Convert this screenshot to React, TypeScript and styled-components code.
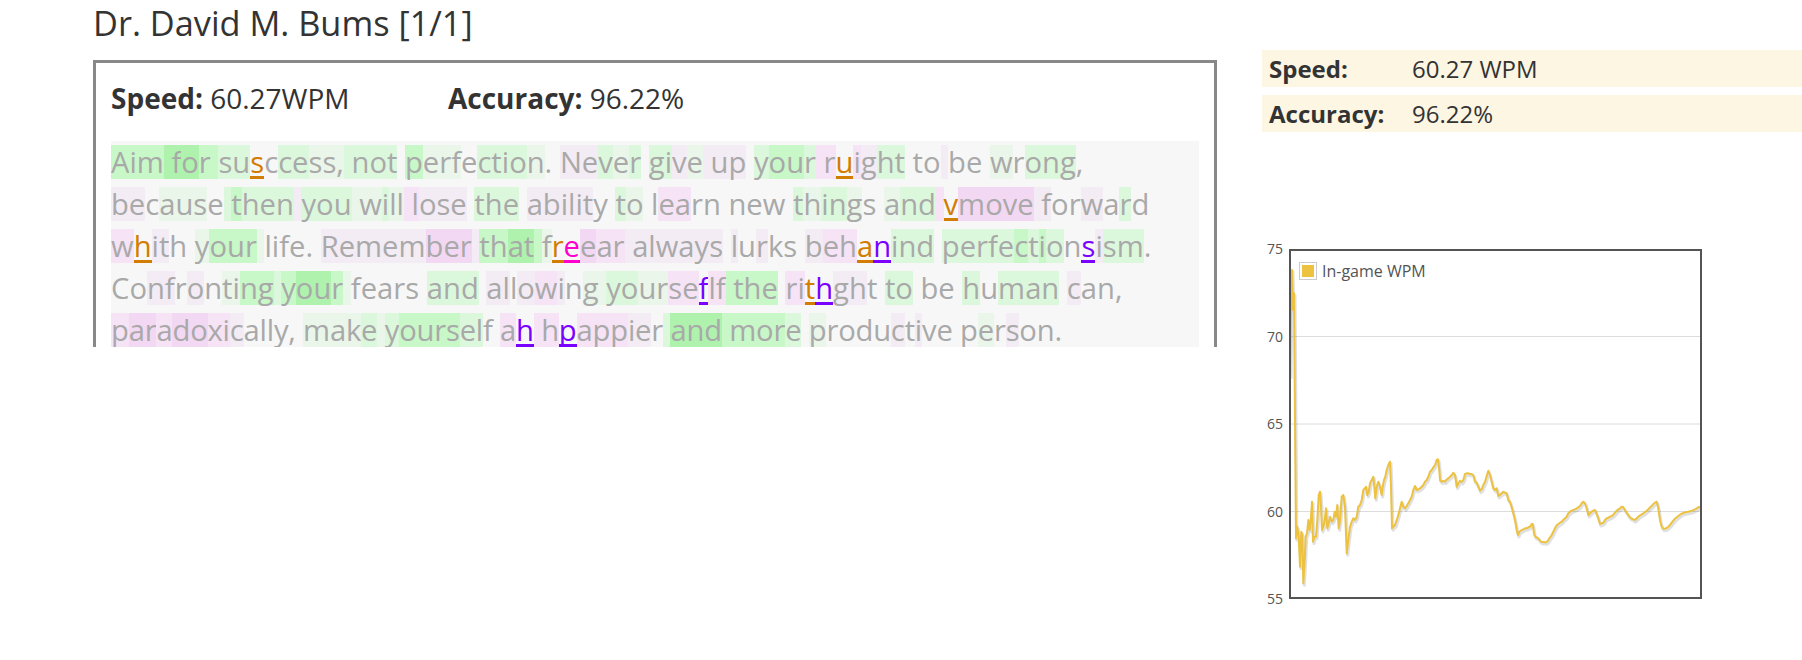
import React from 'react';
import styled, {createGlobalStyle} from 'styled-components';

const GlobalStyle = createGlobalStyle`
  html, body {
    margin: 0;
    padding: 0;
    background: #fff;
    overflow: hidden;
  }
  body {
    font-family: "Open Sans", "Noto Sans", sans-serif;
    color: #333;
  }
`

const Page = styled.div`
  display: flex;
  align-items: flex-start;
  width: 1802px;
  box-sizing: border-box;
  padding-left: 93px;
`

const Main = styled.section`
  flex: none;
  width: 1124px;
`

const Title = styled.h2`
  margin: 0 0 14px;
  font-size: 34.3px;
  font-weight: 400;
  line-height: 46px;
  color: #333;
`

const Card = styled.div`
  box-sizing: border-box;
  height: 287px;
  border: 3px solid #888;
  border-bottom: none;
  padding: 16px 15px 0;
  overflow: hidden;
`

const StatLine = styled.div`
  display: flex;
  font-size: 28px;
  line-height: 38px;
  color: #333;

  b {
    font-weight: 700;
  }
`

const Stat = styled.div`
  flex: none;
  width: 337px;
`

const Passage = styled.div`
  margin-top: 24px;
  background: #f7f7f7;
  font-size: 29.2px;
`

const Line = styled.div<{ $track?: number }>`
  display: flex;
  align-items: center;
  height: 42px;
  letter-spacing: ${p => p.$track || 0}px;
`

const Char = styled.span<{ $bg: string; $mark?: string }>`
  display: inline-block;
  box-sizing: border-box;
  height: 34px;
  line-height: 34px;
  white-space: pre;
  color: ${p => p.$mark || '#a9a9a9'};
  background: ${p => p.$bg};
  box-shadow: ${p => (p.$mark ? `inset 0 -3px 0 ${p.$mark}` : 'none')};
`

const Aside = styled.aside`
  flex: 1;
  margin-left: 45px;
  padding-top: 50px;
`

const Summary = styled.div`
  display: grid;
  gap: 8px;
`

const SummaryRow = styled.div`
  display: grid;
  grid-template-columns: 143px 1fr;
  padding: 2px 7px;
  background: #fdf6e3;
  font-size: 24px;
  line-height: 33px;
  color: #333;

  b {
    font-weight: 700;
  }
`

const ChartBox = styled.div`
  margin-top: 108px;
  width: 450px;
  height: 370px;

  svg {
    display: block;
  }
`

const BG: Record<string, string> = {
    G: '#aef2ae',
    g: '#c8f7c8',
    l: '#dcf8dc',
    e: '#e9f6e9',
    q: '#f4ecf4',
    p: '#f6e3f6',
    P: '#f3d8f3',
};

const MARK: Record<string, string> = {
    O: '#d27c00',
    V: '#7a00ff',
    M: '#ff00cc',
};

// each line: [word, per-char codes]
const lines: [string, string][][] = [
    [['Aim', 'ggg'], [' ', 'G'], ['for', 'GGg'], [' ', 'g'], ['susccess,', 'llO.lleee'], [' ', 'l'], ['not', 'lll'], [' ', '.'],
        ['perfection.', 'geee.lllle.'], [' ', '.'], ['Never', 'qqlel'], [' ', '.'], ['give', 'llqe'], [' ', 'q'], ['up', 'qq'], [' ', '.'],
        ['your', 'lggl'], [' ', 'p'], ['ruight', 'pOpqll'], [' ', '.'], ['to', '..'], [' ', 'q'], ['be', '..'], [' ', '.'], ['wrong,', 'e.lll.']],
    [['because', 'qq.eee.'], [' ', 'l'], ['then', 'glll'], [' ', 'q'], ['you', 'lll'], [' ', 'e'], ['will', 'elee'], [' ', 'p'],
        ['lose', 'pqqq'], [' ', '.'], ['the', 'lll'], [' ', '.'], ['ability', 'qqqqqq.'], [' ', '.'], ['to', 'le'], [' ', '.'],
        ['learn', '.pp..'], [' ', '.'], ['new', '...'], [' ', '.'], ['things', 'lelle.'], [' ', '.'], ['and', 'ell'], [' ', 'p'],
        ['vmove', 'OPPPP'], [' ', 'q'], ['forward', 'q..q.l.']],
    [['whith', 'pOqq.'], [' ', '.'], ['your', 'eggg'], [' ', 'e'], ['life.', '.....'], [' ', '.'], ['Remember', 'qqqqqPPP'], [' ', 'q'],
        ['that', 'ggGG'], [' ', 'g'], ['freear', 'eOMPpp'], [' ', 'q'], ['always', 'qqqqqq'], [' ', '.'], ['lurks', 'q.q..'], [' ', '.'],
        ['behanind', 'qppOVlll'], [' ', '.'], ['perfectionsism.', 'lllllglgl.Vqll.']],
    [['Confronting', '..qq.q.eegg'], [' ', 'l'], ['your', 'gGGg'], [' ', 'e'], ['fears', '.....'], [' ', '.'], ['and', 'lll'], [' ', '.'],
        ['allowing', 'qq.qpq.e'], [' ', 'e'], ['yourseflf', 'lleeppVpp'], [' ', 'g'], ['the', 'ggg'], [' ', '.'], ['rithght', 'ppOVqq.'],
        [' ', '.'], ['to', 'll'], [' ', '.'], ['be', '..'], [' ', '.'], ['human', 'l.lll'], [' ', '.'], ['can,', 'q...']],
    [['paradoxically,', 'pPPpPPppq.....'], [' ', '.'], ['make', 'eeel'], [' ', 'e'], ['yourself', 'lggggll.'], [' ', '.'], ['ah', 'pV'],
        [' ', 'p'], ['hpappier', 'pVpppqq.'], [' ', 'l'], ['and', 'GGG'], [' ', 'g'], ['more', 'gggl'], [' ', '.'],
        ['productive', 'e....q.q..'], [' ', '.'], ['person.', '.e.q...']],
];

// small per-line tracking so each line ends where the reference line ends
const tracking = [0, 0, 0, 0, -0.2];

// wpm trace, traced off the reference chart (zoom coords)
const trace: number[][] = [
    [150, -130], [152, -300], [156, -450], [159, -330], [162, -380], [165, 0], [168, 355], [172, 320], [176, 350], [180, 440],
    [184, 335], [187, 345], [190, 490], [194, 420], [197, 350], [201, 340], [205, 300], [209, 330], [213, 290], [216, 245],
    [219, 365], [223, 350], [228, 350], [232, 300], [236, 225], [240, 215], [243, 260], [246, 330], [250, 320], [254, 300],
    [258, 265], [262, 325], [266, 310], [270, 290], [275, 305], [280, 300], [284, 275], [288, 290], [292, 255], [296, 325],
    [300, 300], [305, 230], [310, 225], [315, 260], [320, 400], [325, 360], [330, 320], [335, 305], [340, 295], [345, 300],
    [350, 290], [355, 260], [360, 255], [365, 240], [370, 210], [375, 205], [378, 200], [382, 225], [386, 215], [390, 190],
    [395, 180], [400, 170], [403, 200], [406, 235], [410, 200], [415, 185], [420, 200], [425, 225], [428, 200], [432, 180],
    [436, 170], [440, 150], [445, 135], [450, 125], [453, 200], [456, 325], [460, 320], [465, 315], [470, 300], [475, 285],
    [480, 265], [485, 245], [490, 260], [495, 265], [500, 258], [505, 250], [510, 240], [515, 230], [520, 210], [525, 198],
    [530, 210], [535, 208], [540, 205], [545, 200], [550, 195], [555, 185], [560, 180], [565, 170], [570, 155], [575, 150],
    [580, 142], [585, 135], [590, 120], [594, 118], [598, 150], [600, 180], [605, 185], [610, 183], [615, 185], [620, 178],
    [625, 175], [630, 170], [635, 165], [640, 158], [645, 165], [650, 200], [655, 190], [660, 182], [665, 186], [670, 180],
    [675, 162], [680, 160], [685, 160], [690, 162], [695, 162], [700, 165], [705, 185], [710, 188], [715, 200], [720, 212],
    [725, 208], [730, 195], [735, 185], [740, 168], [745, 152], [750, 165], [755, 185], [760, 205], [765, 210], [770, 205],
    [775, 228], [780, 225], [785, 220], [790, 215], [795, 218], [800, 220], [805, 240], [810, 245], [815, 262], [820, 280],
    [825, 300], [830, 330], [834, 345], [838, 335], [845, 330], [850, 328], [855, 325], [860, 325], [865, 322], [870, 320],
    [875, 312], [878, 312], [882, 340], [886, 350], [890, 352], [895, 355], [900, 362], [905, 366], [910, 366], [915, 367],
    [920, 366], [925, 360], [930, 352], [935, 345], [940, 335], [945, 325], [950, 316], [955, 312], [960, 308], [965, 305],
    [970, 300], [975, 295], [980, 290], [985, 280], [990, 275], [995, 272], [1000, 270], [1005, 268], [1010, 265], [1015, 262],
    [1020, 258], [1025, 250], [1030, 245], [1035, 250], [1040, 265], [1045, 285], [1050, 280], [1055, 275], [1060, 272],
    [1065, 270], [1070, 282], [1075, 295], [1080, 312], [1085, 310], [1090, 308], [1095, 300], [1100, 295], [1105, 293],
    [1110, 290], [1115, 288], [1120, 284], [1125, 278], [1130, 272], [1135, 268], [1140, 265], [1145, 260], [1150, 262],
    [1155, 270], [1160, 278], [1165, 285], [1170, 292], [1175, 296], [1180, 298], [1185, 300], [1190, 295], [1195, 290],
    [1200, 286], [1205, 283], [1210, 280], [1215, 276], [1220, 272], [1225, 268], [1230, 262], [1235, 258], [1240, 252],
    [1245, 248], [1250, 245], [1255, 265], [1260, 300], [1265, 320], [1270, 326], [1275, 326], [1280, 324], [1285, 320],
    [1290, 315], [1295, 308], [1300, 302], [1305, 296], [1310, 292], [1315, 288], [1320, 284], [1325, 281], [1330, 279],
    [1335, 277], [1340, 276], [1345, 275], [1350, 274], [1355, 273], [1360, 270], [1365, 268], [1370, 265], [1375, 262],
    [1380, 260],
];

const PLOT = {left: 27, top: 9, right: 440, bottom: 359};
const yOf = (v: number) => PLOT.top + (75 - v) * 17.5;

const Chart = () => {
    const pts = trace.map(([x, y]) => `${(x / 3 - 22).toFixed(1)},${(y / 3 + 180).toFixed(1)}`).join(' ');
    return (
        <svg width={450} height={370} viewBox="0 0 450 370">
            <defs>
                <clipPath id="plot">
                    <rect x={PLOT.left} y={PLOT.top} width={PLOT.right - PLOT.left} height={PLOT.bottom - PLOT.top}/>
                </clipPath>
            </defs>
            {[70, 65, 60].map(v => (
                <line key={v} x1={PLOT.left} x2={PLOT.right} y1={yOf(v)} y2={yOf(v)} stroke="#dcdcdc" strokeWidth={1}/>
            ))}
            {[75, 70, 65, 60, 55].map(v => (
                <text key={v} x={21} y={yOf(v) + 5} textAnchor="end" fontSize={14} fill="#545454"
                      fontFamily='"Open Sans", sans-serif'>{v}</text>
            ))}
            <g clipPath="url(#plot)">
                <polyline points={pts} fill="none" stroke="rgba(0,0,0,0.12)" strokeWidth={3}
                          transform="translate(1 2)" strokeLinejoin="round"/>
                <polyline points={pts} fill="none" stroke="#edc240" strokeWidth={2} strokeLinejoin="round"/>
            </g>
            <rect x={PLOT.left + 1} y={PLOT.top + 1} width={PLOT.right - PLOT.left - 2} height={PLOT.bottom - PLOT.top - 2}
                  fill="none" stroke="#545454" strokeWidth={2}/>
            <rect x={37.5} y={22.5} width={17} height={17} fill="#fff" stroke="#ccc" strokeWidth={1}/>
            <rect x={40} y={25} width={12} height={12} fill="#edc240"/>
            <text x={60} y={37} fontSize={16} fill="#545454" fontFamily='"Open Sans", sans-serif'>In-game WPM</text>
        </svg>
    );
};

const App = () => (
    <>
        <GlobalStyle/>
        <Page>
            <Main>
                <Title>Dr. David M. Bums [1/1]</Title>
                <Card>
                    <StatLine>
                        <Stat><b>Speed:</b> 60.27WPM</Stat>
                        <Stat><b>Accuracy:</b> 96.22%</Stat>
                    </StatLine>
                    <Passage>
                        {lines.map((words, li) => (
                            <Line key={li} $track={tracking[li]}>
                                {words.flatMap(([text, codes], wi) =>
                                    text.split('').map((ch, ci) => {
                                        const c = codes[ci] || '.';
                                        return (
                                            <Char key={`${wi}-${ci}`} $bg={BG[c] || 'transparent'} $mark={MARK[c]}>
                                                {ch}
                                            </Char>
                                        );
                                    })
                                )}
                            </Line>
                        ))}
                    </Passage>
                </Card>
            </Main>
            <Aside>
                <Summary>
                    <SummaryRow><b>Speed:</b><span>60.27 WPM</span></SummaryRow>
                    <SummaryRow><b>Accuracy:</b><span>96.22%</span></SummaryRow>
                </Summary>
                <ChartBox>
                    <Chart/>
                </ChartBox>
            </Aside>
        </Page>
    </>
);

export default App;
